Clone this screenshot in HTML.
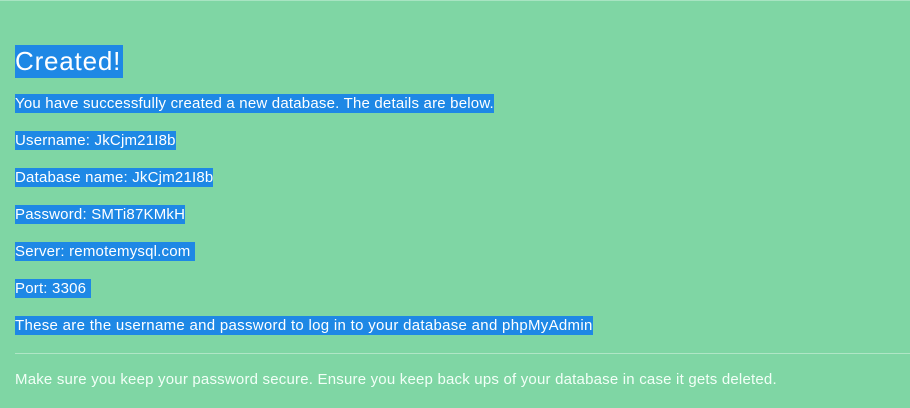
<!DOCTYPE html>
<html><head><meta charset="utf-8"><style>
html,body{margin:0;padding:0}
body{width:910px;height:408px;background:#7fd6a4;position:relative;overflow:hidden;font-family:"Liberation Sans",Arial,sans-serif;color:#fff}
.t{position:absolute;left:15px;white-space:nowrap}
.h{background:#1e88e5;display:inline-block}
.p{font-size:15px;letter-spacing:0.2px;height:19px;line-height:19px}
</style></head><body>
<div style="position:absolute;left:0;top:0;width:910px;height:1px;background:#a8e4c2"></div>
<div class="t" style="top:45px"><span class="h" style="font-size:26px;letter-spacing:0.8px;height:33px;line-height:33px;padding-right:2px">Created!</span></div>
<div class="t p" style="top:94px"><span class="h">You have successfully created a new database. The details are below.</span></div>
<div class="t p" style="top:131px"><span class="h">Username: JkCjm21I8b</span></div>
<div class="t p" style="top:168px"><span class="h">Database name: JkCjm21I8b</span></div>
<div class="t p" style="top:205px"><span class="h">Password: SMTi87KMkH</span></div>
<div class="t p" style="top:242px"><span class="h">Server: remotemysql.com&nbsp;</span></div>
<div class="t p" style="top:279px"><span class="h">Port: 3306&nbsp;</span></div>
<div class="t p" style="top:316px"><span class="h" style="letter-spacing:0.3px">These are the username and password to log in to your database and phpMyAdmin</span></div>
<div style="position:absolute;left:15px;top:353px;width:895px;height:1px;background:#b0e6c6"></div>
<div class="t p" style="top:370px;color:#f2fff7">Make sure you keep your password secure. Ensure you keep back ups of your database in case it gets deleted.</div>
</body></html>
